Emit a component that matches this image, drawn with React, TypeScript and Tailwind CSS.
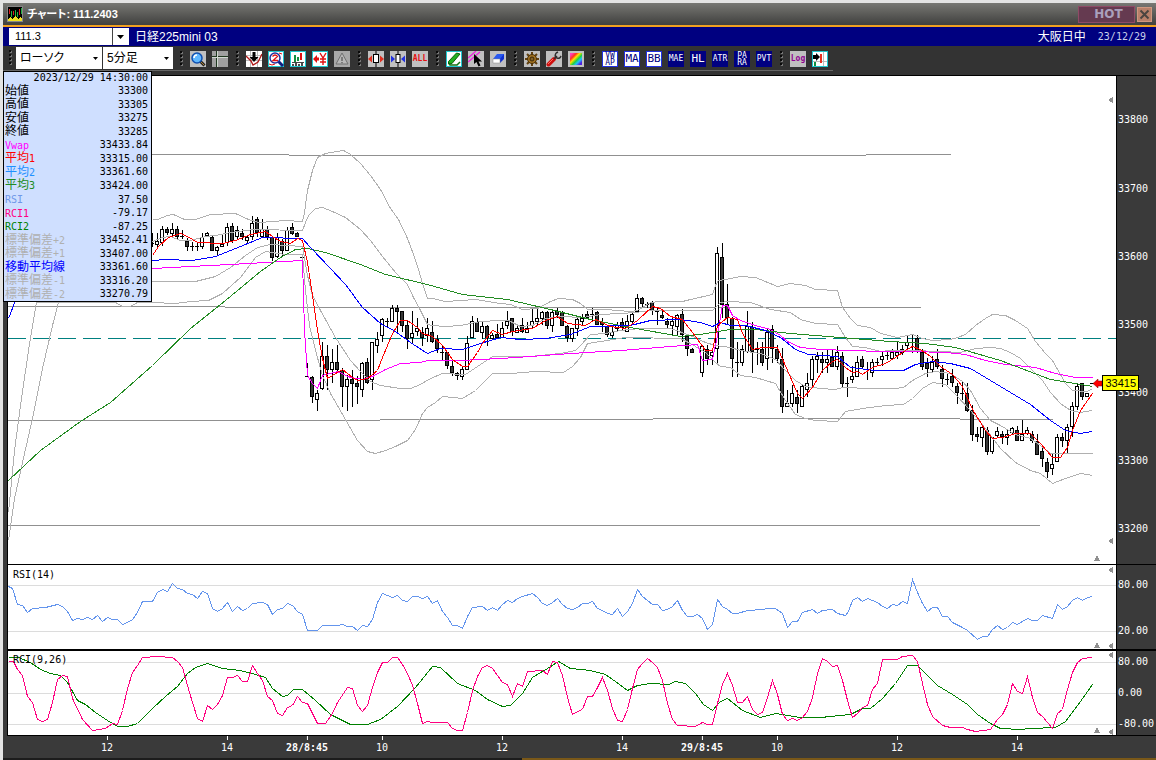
import React from "react";

const CJK = "font-['Liberation_Sans','Noto_Sans_CJK_JP',sans-serif]";
const MONO = "font-['DejaVu_Sans_Mono','Noto_Sans_CJK_JP',monospace] text-[10px]";

/* One row per five-minute bar: wick top, body top, body bottom, wick bottom, 1 = falling bar. */
type Bar = [number, number, number, number, number];
const FIRST_X = 152;
const STEP = 5;
const BARS: (Bar | null)[] = [
  [233, 243, 244, 247, 1], [233, 241, 245, 247, 0], [226, 229, 243, 246, 0], [227, 229, 233, 235, 1],
  [223, 229, 234, 237, 0], [226, 229, 237, 240, 1], [230, 236, 237, 239, 1], [238, 241, 247, 251, 1],
  [242, 246, 247, 251, 1], [243, 246, 247, 251, 1], [233, 237, 247, 249, 0], [232, 233, 236, 237, 0],
  [235, 237, 251, 251, 1], [246, 247, 251, 255, 0], [235, 244, 247, 247, 0], [223, 227, 243, 246, 0],
  [223, 226, 241, 243, 1], [226, 230, 237, 239, 0], [229, 233, 237, 240, 1], [236, 237, 241, 244, 0],
  [216, 223, 237, 240, 0], [217, 219, 233, 237, 1], [219, 229, 237, 238, 0], [226, 229, 237, 240, 1],
  [236, 237, 258, 261, 1], [233, 237, 257, 258, 0], [239, 241, 251, 257, 1], [227, 230, 251, 251, 0],
  [223, 227, 234, 235, 1], [232, 233, 237, 237, 1], [257, 257, 258, 258, 1], [363, 376, 377, 377, 1],
  [376, 377, 397, 403, 1], [390, 393, 400, 411, 0], [342, 356, 389, 390, 0], [345, 356, 370, 390, 1],
  [349, 362, 370, 383, 0], [345, 362, 370, 373, 1], [368, 370, 387, 407, 1], [375, 379, 387, 411, 0],
  [370, 379, 384, 407, 1], [376, 383, 387, 404, 1], [362, 363, 390, 397, 0], [358, 362, 383, 384, 1],
  [342, 342, 380, 390, 0], [332, 339, 346, 353, 0], [318, 319, 336, 342, 0], [318, 321, 322, 327, 1],
  [305, 308, 322, 322, 0], [305, 308, 312, 332, 1], [311, 311, 326, 332, 1], [321, 325, 339, 349, 1],
  [311, 333, 338, 343, 0], [318, 328, 332, 336, 0], [327, 332, 338, 346, 1], [318, 328, 336, 342, 0],
  [321, 332, 342, 343, 1], [335, 339, 349, 353, 1], [345, 352, 353, 360, 1], [352, 352, 366, 369, 1],
  [361, 366, 373, 376, 1], [372, 373, 376, 380, 1], [366, 369, 377, 380, 0], [336, 343, 370, 370, 0],
  [316, 321, 338, 338, 0], [318, 322, 332, 332, 1], [322, 326, 333, 339, 0], [325, 326, 338, 346, 1],
  [333, 335, 339, 339, 0], [324, 334, 338, 338, 1], [322, 328, 338, 338, 0], [311, 321, 326, 329, 0],
  [318, 318, 332, 336, 1], [325, 328, 333, 333, 0], [318, 325, 332, 333, 1], [322, 328, 333, 333, 0],
  [308, 321, 326, 328, 0], [308, 318, 322, 325, 0], [311, 312, 319, 325, 0], [311, 312, 326, 329, 1],
  [311, 312, 326, 332, 0], [308, 311, 315, 318, 1], [311, 312, 326, 326, 1], [325, 326, 338, 342, 1],
  [328, 328, 339, 342, 0], [318, 319, 329, 336, 0], [314, 318, 322, 325, 0], [311, 314, 318, 318, 1],
  [308, 314, 315, 322, 1], [311, 312, 325, 325, 1], [318, 322, 325, 332, 1], [325, 326, 335, 337, 1],
  [325, 332, 336, 338, 0], [322, 325, 329, 332, 0], [318, 322, 328, 330, 1], [315, 321, 332, 332, 0],
  [311, 314, 322, 325, 0], [294, 298, 312, 313, 0], [297, 298, 304, 307, 1], [302, 304, 305, 308, 1],
  [301, 302, 311, 315, 1], [307, 311, 312, 325, 1], [310, 315, 318, 319, 1], [318, 321, 325, 328, 1],
  [318, 321, 326, 336, 0], [314, 315, 327, 336, 0], [309, 314, 335, 342, 1], [335, 336, 349, 356, 1],
  [348, 349, 353, 353, 1], null, [345, 346, 373, 377, 0], [345, 349, 359, 365, 1],
  [349, 352, 356, 365, 0], [247, 253, 349, 363, 0], [243, 257, 305, 318, 1], [284, 304, 318, 325, 1],
  [317, 318, 359, 377, 1], [342, 362, 363, 377, 1], [345, 349, 363, 366, 0], [311, 326, 352, 353, 0],
  [322, 327, 352, 373, 1], [342, 349, 350, 365, 1], [342, 349, 363, 366, 1], [329, 332, 359, 370, 0],
  [325, 329, 349, 363, 1], [345, 349, 359, 363, 1], [348, 359, 407, 413, 1], [390, 403, 407, 407, 0],
  [385, 393, 404, 407, 0], [390, 397, 404, 413, 1], [385, 386, 407, 407, 0], [373, 383, 390, 397, 0],
  [356, 359, 380, 387, 0], [352, 356, 360, 373, 0], [352, 359, 363, 373, 1], [349, 359, 363, 373, 0],
  [349, 357, 367, 367, 1], [346, 352, 367, 370, 0], [352, 356, 384, 387, 1], [377, 383, 384, 397, 1],
  [366, 376, 380, 383, 0], [356, 362, 377, 377, 0], [356, 359, 367, 369, 1], [362, 369, 370, 380, 1],
  [359, 362, 373, 377, 0], [358, 362, 363, 366, 1], [352, 356, 360, 366, 0], [352, 355, 356, 360, 1],
  [349, 352, 359, 360, 0], [342, 352, 356, 359, 0], [345, 349, 353, 355, 0], [335, 342, 346, 351, 0],
  [335, 342, 343, 353, 1], [335, 338, 352, 353, 1], [349, 352, 367, 370, 1], [358, 363, 369, 377, 1],
  [356, 362, 370, 372, 0], [349, 359, 367, 369, 1], [365, 369, 379, 387, 1], [373, 379, 380, 385, 1],
  [369, 376, 383, 387, 1], [383, 386, 393, 404, 1], [382, 393, 394, 400, 1], [383, 393, 411, 412, 1],
  [405, 410, 435, 441, 1], [427, 434, 437, 442, 1], [427, 427, 438, 447, 0], [427, 430, 452, 455, 1],
  [437, 437, 452, 454, 0], [427, 431, 436, 437, 0], [431, 434, 437, 444, 1], [430, 434, 438, 445, 0],
  [427, 428, 433, 434, 0], [426, 430, 441, 441, 1], [420, 434, 441, 441, 0], [427, 430, 434, 435, 0],
  [431, 434, 441, 443, 1], [434, 441, 455, 455, 1], [445, 451, 459, 467, 1], [458, 462, 472, 478, 1],
  [453, 464, 469, 475, 0], [434, 437, 462, 462, 0], [433, 437, 441, 447, 1], [424, 427, 441, 454, 0],
  [402, 406, 427, 437, 0], [383, 386, 407, 410, 0], [383, 383, 397, 400, 1], [393, 393, 397, 397, 0],
  [383, 383, 384, 384, 1],
];

const BAND_COLOR = "#b0b0b0";
const OVERLAYS: { color: string; points: string }[] = [
  { color: BAND_COLOR, points: "152,219 157,219 167,215 173,214 184,219 195,219 210,214 235,213 248,219 258,222 273,221 285,220 302,221 304,212 307,190 312,170 317,157 325,153 343,150 350,154 360,163 370,175 380,189 390,208 398,219 407,238 413,254 418,269 422,283 427,298 432,298 445,301 475,299 500,303 510,304 522,309 537,308 550,301 558,298 572,299 580,303 587,309 605,309 630,311 637,310 650,302 660,301 682,301 690,299 712,294 715,285 718,280 725,279 740,276 755,277 777,286 790,283 805,285 815,289 837,290 842,307 850,318 857,325 870,327 880,333 897,337 912,334 922,338 932,340 950,339 957,337 965,334 975,325 985,318 992,314 1005,315 1015,320 1027,328 1035,341 1045,353 1052,360 1060,374 1065,383 1072,390 1087,391 1092,388" },
  { color: BAND_COLOR, points: "152,241 162,237 170,236 180,240 190,240 205,236 215,235 230,232 245,230 255,229 302,230 305,222 308,215 315,208 322,207 332,211 345,217 360,229 370,240 382,256 395,272 407,284 413,297 420,310 427,324 432,325 445,326 460,325 480,321 500,320 508,320 520,326 532,325 545,318 560,316 583,317 600,314 620,313 635,312 650,310 712,310 720,302 727,301 750,302 770,309 790,312 800,319 815,323 837,324 845,337 852,346 865,347 880,351 890,350 910,350 940,351 960,352 975,348 990,347 1000,348 1010,352 1020,358 1030,368 1042,380 1050,392 1060,403 1070,410 1080,412 1092,410" },
  { color: BAND_COLOR, points: "8,540 14,498 22,462 32,418 42,368 52,325 58,302 152,281 195,281 215,276 230,267 245,255 257,247 270,244 302,246 307,275 312,295 320,310 335,337 350,360 360,371 370,381 380,385 400,388 410,388 420,384 430,378 442,373 465,374 480,364 492,356 530,356 560,353 575,350 580,345 590,334 605,333 620,330 640,328 670,328 690,335 705,342 715,345 730,347 740,350 760,353 775,359 785,370 795,380 805,386 820,388 835,389 842,387 870,388 895,388 903,387 912,380 925,373 935,371 950,373 962,381 970,390 980,408 990,420 1000,425 1015,434 1030,438 1040,445 1050,453 1092,453" },
  { color: BAND_COLOR, points: "8,512 14,450 20,405 28,350 36,302 115,302 122,306 130,306 137,302 152,302 175,303 190,301 208,300 222,293 240,277 255,257 265,251 285,254 302,254 305,290 309,325 315,350 322,375 330,393 345,419 357,440 367,451 375,453 385,450 395,446 407,440 415,429 422,413 427,407 435,402 442,396 462,398 475,390 485,380 492,373 510,373 535,371 563,372 572,366 580,357 587,343 600,341 625,337 680,338 690,343 705,352 715,362 720,366 730,367 740,375 755,377 775,383 785,400 795,414 805,418 815,420 837,421 845,411 862,408 885,405 903,404 912,398 922,388 932,382 945,384 955,394 970,410 985,428 1000,448 1015,462 1030,470 1040,473 1052,483 1065,478 1080,473 1092,475" },
  { color: "#ff00ff", points: "152,268 190,266 230,264 265,262 302,260 304,330 307,375 312,383 317,388 322,375 337,371 350,377 362,379 372,376 385,369 400,363 420,362 427,360 460,360 500,358 530,356 570,353 620,350 670,346 697,344 702,360 712,359 717,335 722,305 727,305 732,315 740,320 755,325 770,329 780,335 787,341 800,347 820,349 850,350 880,351 910,351 945,352 965,354 985,360 1005,364 1035,367 1055,373 1075,377 1092,377" },
  { color: "#228b22", points: "8,480 40,450 80,421 110,402 152,365 190,328 225,300 260,271 280,257 295,249 307,248 325,252 360,264 385,274 410,280 427,284 462,294 507,299 550,309 590,319 630,327 680,336 700,334 730,329 755,329 790,333 840,337 890,341 925,343 955,347 1000,360 1050,379 1075,383 1092,386" },
  { color: "#0000ff", points: "8,318 15,300 152,260 165,259 192,260 215,256 235,248 262,237 302,238 310,247 330,268 345,284 362,307 380,323 395,331 410,342 427,353 440,348 462,349 480,343 500,337 520,339 545,338 570,334 590,326 630,325 650,320 680,319 700,322 712,326 720,322 730,325 745,325 765,330 780,337 795,349 808,354 837,356 850,367 875,370 903,370 915,364 932,361 950,363 970,368 1000,386 1030,404 1050,420 1065,430 1080,433 1092,431" },
  { color: "#ff0000", points: "152,255 158,246 168,237 180,233 187,236 197,242 222,243 235,240 250,234 265,231 272,236 280,241 290,243 297,238 302,240 307,262 312,295 317,330 322,358 327,378 332,375 342,369 352,377 357,380 367,378 377,370 382,357 392,333 400,320 407,320 417,327 422,333 432,336 442,345 452,359 462,366 467,366 477,352 482,343 492,330 502,334 512,331 532,328 545,320 557,316 567,323 585,325 595,319 610,326 625,328 637,320 652,306 660,308 670,316 682,319 695,336 705,350 712,350 717,325 727,317 737,319 742,333 752,349 762,347 777,347 787,370 797,393 802,398 812,387 822,370 832,361 837,359 845,367 852,372 857,371 862,374 872,367 885,363 895,357 905,350 912,346 920,349 930,356 940,366 952,374 962,386 972,409 985,430 992,438 1002,437 1015,433 1030,433 1040,443 1052,457 1060,457 1067,447 1072,430 1080,410 1092,393" },
];

const RSI =
  "8,586 12,588 17,604 22,605 27,612 32,608 45,607 57,604 62,606 67,611 72,620 77,618 82,619 87,617 92,619 97,615 102,621 107,617 112,619 117,619 122,624 127,622 132,619 137,612 142,601 152,601 157,592 162,589 167,591 172,583 177,588 182,589 187,593 192,594 197,598 202,591 207,593 212,608 217,611 222,608 227,602 232,611 237,606 242,610 247,608 252,603 262,602 267,604 272,614 277,609 282,608 287,603 292,605 297,611 302,614 307,630 317,630 322,625 337,625 342,624 347,626 352,626 357,630 362,625 367,626 372,619 377,602 382,593 387,595 392,597 397,595 402,600 407,601 412,596 417,596 422,598 427,596 432,603 437,600 442,611 447,617 452,625 457,625 462,628 467,616 472,607 482,606 487,610 492,607 497,610 502,604 507,600 512,602 517,598 522,596 532,593 537,597 542,603 547,605 552,602 557,598 562,604 567,608 572,609 577,607 582,603 587,603 592,601 597,608 602,610 607,613 612,614 617,608 622,616 627,611 632,603 637,589 642,596 652,604 657,604 662,610 667,609 672,606 677,600 682,610 687,616 692,616 697,614 702,618 707,629 712,624 717,599 722,606 727,609 732,613 737,613 747,610 762,609 767,608 775,608 782,613 787,627 792,621 797,621 802,612 812,609 817,613 822,610 832,609 837,613 845,615 848,611 852,600 857,597 862,601 867,598 877,602 882,606 887,608 892,604 897,605 902,601 907,603 912,579 917,592 922,603 927,611 932,607 937,607 942,616 947,616 952,622 960,626 967,630 977,639 982,636 987,636 992,629 997,625 1002,629 1007,627 1012,622 1017,624 1027,618 1032,620 1037,620 1042,615 1052,618 1057,604 1062,609 1067,606 1072,600 1077,597 1082,600 1087,597 1092,596";

const RCI_SHORT =
  "8,661 13,661 17,669 22,675 27,696 32,702 37,719 42,721 47,719 52,702 57,679 62,675 67,676 72,698 82,719 92,730 105,728 112,723 117,724 122,710 127,688 132,672 137,665 142,657 157,656 172,657 177,661 182,667 187,685 192,702 197,718 202,721 207,705 212,709 217,704 222,695 227,677 232,677 237,675 242,681 247,681 252,665 257,673 262,680 267,696 272,700 277,713 282,715 287,707 292,705 297,696 302,702 307,703 312,713 317,723 325,723 332,713 337,702 347,687 352,688 357,705 362,711 367,705 372,687 377,672 382,662 387,662 392,657 397,657 402,664 407,673 412,685 417,703 422,723 427,721 432,722 447,722 452,728 457,730 462,730 467,712 472,690 477,676 482,667 487,665 492,668 497,675 502,682 507,684 512,696 517,683 522,686 527,671 542,670 547,674 552,661 557,662 562,675 567,697 572,714 577,711 582,709 587,696 592,696 597,687 602,677 607,690 612,708 617,720 622,721 627,709 632,688 637,669 642,663 647,658 652,662 657,667 662,680 667,703 672,719 677,725 695,726 702,722 707,724 712,724 717,703 722,684 727,673 732,685 737,702 742,702 747,696 752,709 757,714 762,712 767,697 772,680 777,694 782,714 787,720 792,718 797,720 802,717 807,711 812,697 817,673 822,658 827,661 832,666 837,665 842,680 847,700 852,717 857,713 862,707 867,705 872,689 877,683 882,659 897,659 902,656 912,655 917,661 922,683 927,704 932,716 942,725 950,727 962,727 967,729 975,731 990,729 997,719 1002,714 1007,704 1012,683 1017,691 1022,693 1027,676 1032,697 1037,712 1042,716 1052,728 1057,713 1062,709 1067,689 1072,672 1077,662 1082,658 1092,657";

const RCI_LONG =
  "8,657 18,657 30,662 40,669 50,673 60,675 67,682 77,700 85,704 95,712 107,720 117,726 127,726 137,723 152,708 165,696 177,686 187,673 195,667 207,663 222,668 240,670 255,674 265,677 272,688 282,696 287,695 293,689 302,689 315,700 330,714 350,724 367,724 380,719 397,706 415,687 432,666 440,667 457,683 475,690 487,699 502,706 510,705 522,693 532,677 547,668 558,661 570,668 590,670 605,674 615,681 627,690 637,685 650,683 668,684 675,681 685,683 695,693 703,704 712,710 720,701 727,698 742,710 760,717 775,713 800,717 820,717 850,714 862,708 870,708 882,698 895,683 907,665 917,665 937,685 952,694 967,704 977,714 990,723 1000,728 1020,729 1030,728 1055,727 1065,721 1080,701 1092,684";

const QUOTES: [string, string, string][] = [
  ["始値", "33300", "text-black"],
  ["高値", "33305", "text-black"],
  ["安値", "33275", "text-black"],
  ["終値", "33285", "text-black"],
  ["Vwap", "33433.84", "text-[#ff00ff]"],
  ["平均1", "33315.00", "text-[#ff0000]"],
  ["平均2", "33361.60", "text-[#1e90ff]"],
  ["平均3", "33424.00", "text-[#228b22]"],
  ["RSI", "37.50", "text-[#6f98e8]"],
  ["RCI1", "-79.17", "text-[#ff0080]"],
  ["RCI2", "-87.25", "text-[#008000]"],
  ["標準偏差+2", "33452.41", "text-[#b0b0b0]"],
  ["標準偏差+1", "33407.00", "text-[#b0b0b0]"],
  ["移動平均線", "33361.60", "text-[#0000ff]"],
  ["標準偏差-1", "33316.20", "text-[#b0b0b0]"],
  ["標準偏差-2", "33270.79", "text-[#b0b0b0]"],
];

const TIMES: [number, string, boolean][] = [
  [107, "12", false], [227, "14", false], [307, "28/8:45", true], [382, "10", false], [502, "12", false],
  [622, "14", false], [702, "29/8:45", true], [777, "10", false], [897, "12", false], [1017, "14", false],
];

function Trace({ points, color }: { points: string; color: string }) {
  return <polyline points={points} fill="none" stroke={color} strokeWidth={1} transform="translate(0.5 0.5)" />;
}

function Candles() {
  return (
    <g>
      {BARS.map((bar, i) => {
        if (!bar) return null;
        const [high, top, bottom, low, falling] = bar;
        const x = FIRST_X + STEP * i;
        const h = bottom - top;
        return (
          <g key={i}>
            <rect x={x} y={high} width={1} height={Math.max(1, low - high)} fill="#000" />
            <rect x={x - 2} y={top} width={4} height={h} fill="#000" />
            {h > 2 && <rect x={x - 1} y={top + 1} width={2} height={h - 2} fill={falling ? "#383838" : "#fff"} />}
          </g>
        );
      })}
    </g>
  );
}

function Arrows({ left, up }: { left: number[]; up: number[] }) {
  return (
    <g fill="#909090">
      {left.map((y) => <path key={y} d={`M1108 ${y}l5-3v6z`} />)}
      {up.map((y) => <path key={y} d={`M1097 ${y - 3}l3 6h-6z`} />)}
    </g>
  );
}

function Pane({ top, height, label, children }: { top: number; height: number; label: string; children: React.ReactNode }) {
  return (
    <svg
      role="img"
      aria-label={label}
      viewBox={`8 ${top} 1108 ${height}`}
      preserveAspectRatio="none"
      shapeRendering="crispEdges"
      className="block w-full h-full bg-white"
    >
      {children}
    </svg>
  );
}

function Scale({ top, height, ticks }: { top: number; height: number; ticks: [number, string][] }) {
  return (
    <div className={`relative w-[39px] shrink-0 text-white leading-3 ${MONO}`}>
      {ticks.map(([y, text]) => (
        <span key={text} className="absolute left-px -translate-y-1/2" style={{ top: `${((y - top) / height) * 100}%` }}>
          {text}
        </span>
      ))}
    </div>
  );
}

function Grip() {
  return (
    <svg width="6" height="16" viewBox="0 0 6 16" className="shrink-0" shapeRendering="crispEdges" aria-hidden="true">
      {[0, 4, 8, 12].map((y) => (
        <g key={y}>
          <rect x="3" y={y + 1} width="2" height="2" fill="#777" />
          <rect x="2" y={y} width="2" height="2" fill="#0a0a0a" />
        </g>
      ))}
    </svg>
  );
}

function Tool({ label, children }: { label: string; children: React.ReactNode }) {
  return (
    <button type="button" aria-label={label} title={label} className="block size-4 shrink-0">
      <svg width="16" height="16" viewBox="0 0 16 16" className="block" aria-hidden="true">
        {children}
      </svg>
    </button>
  );
}

function Face({ fill = "#c0c0c0", edge }: { fill?: string; edge?: string }) {
  return (
    <>
      <rect width="16" height="16" fill={edge ?? fill} />
      <rect x="1" y="1" width="14" height="14" fill={fill} />
    </>
  );
}

function TextTool({ lines, tone }: { lines: string[]; tone: "light" | "dark" | "log" }) {
  const tones = {
    light: "bg-white text-[#000080] border border-[#2030e0]",
    dark: "bg-[#000080] text-white border border-[#000080]",
    log: "bg-[#c0c0c0] text-[#900090] border border-[#c0c0c0] font-bold",
  };
  const size = lines.length > 1 ? "text-[8px] leading-[7px]" : lines[0].length === 2 ? "text-[11px] leading-3" : "text-[8px] leading-3";
  return (
    <button
      type="button"
      className={`flex flex-col items-center justify-center size-4 shrink-0 font-['DejaVu_Sans_Mono',monospace] ${size} ${tones[tone]}`}
    >
      {lines.map((l) => <span key={l}>{l}</span>)}
    </button>
  );
}

const CYAN = "#20c8d0";

function ToolBar() {
  return (
    <div className="flex items-center h-[24px] bg-[#333] pl-[4px]">
      <Grip />
      <Picker id="style" label="足種" value="ローソク" className="w-[86px] ml-[3px]" />
      <Picker id="span" label="足間隔" value="5分足" className="w-[70px] ml-px mr-[5px]" />
      <div className="flex items-center gap-1.5 pt-px">
        <Grip />
        <Tool label="検索">
          <Face />
          <path d="M10 10l4.500 4.500" stroke="#222" strokeWidth="3" />
          <path d="M10 10l4 4" stroke="#b08030" strokeWidth="1" />
          <circle cx="7" cy="7" r="5" fill="#60b8ff" stroke="#1050b0" strokeWidth="1.500" />
          <path d="M4 7a3 3 0 0 1 3-3" stroke="#fff" strokeWidth="1.600" fill="none" />
        </Tool>
        <Tool label="十字線">
          <Face fill="#a0a0a0" />
          <path d="M4.500 0v16M0 5.500h16" stroke="#203820" strokeWidth="1" />
          <path d="M5.500 0v16M0 6.500h16" stroke="#d0d8d0" strokeWidth="1" />
        </Tool>
        <Grip />
        <Tool label="比較">
          <Face fill="#fff" />
          <path d="M0 4.500h16M0 9.500h16M4.500 0v16M11.500 0v16" stroke="#bbb" />
          <path d="M0 5l5 5 2 4 5-3 4-8" stroke="#b01818" strokeWidth="1.300" fill="none" />
          <path d="M8 1v5" stroke="#000" strokeWidth="3" />
          <path d="M3.500 6h9L8 11z" fill="#000" />
        </Tool>
        <Tool label="拡大">
          <Face fill="#fff" edge={CYAN} />
          <path d="M10 10l5 5" stroke="#102080" strokeWidth="3" />
          <circle cx="7" cy="7" r="5" fill="#fff" stroke="#2030a0" strokeWidth="1.500" />
          <path d="M4.500 5.500q2.500-3 5 0L5 9.500h5" stroke="#e01010" strokeWidth="1.300" fill="none" />
          <path d="M1 13l3 1 3-1M11 2l3 1" stroke="#e01010" fill="none" />
        </Tool>
        <Tool label="出来高">
          <Face fill="#fff" edge={CYAN} />
          <path d="M5 4v7" stroke="#119040" strokeWidth="2" />
          <path d="M11 2v7" stroke="#e01010" strokeWidth="2" />
          <path d="M8 6v4" stroke="#119040" strokeWidth="2" />
          <path d="M2 11.500h12" stroke="#444" />
          <path d="M3 15v-2M6 15v-3M9 15v-2M12 15v-3" stroke="#111" strokeWidth="1.500" />
        </Tool>
        <Tool label="約定">
          <Face fill="#fff" edge={CYAN} />
          <path d="M1 8l4-4v2.500h2v3H5V12z" fill="#e01010" />
          <path d="M8 2l3 5 3-5M11 7v7M8 8h6M8 11h6" stroke="#e01010" strokeWidth="1.400" fill="none" />
        </Tool>
        <Tool label="警告">
          <Face fill="#a8a8a8" />
          <path d="M8 2l6 11H2z" fill="#b8b8b8" stroke="#707070" />
          <path d="M8 6v4M8 11v1.200" stroke="#666" strokeWidth="1.500" />
        </Tool>
        <Grip />
        <Tool label="足幅を拡大">
          <Face />
          <path d="M8 0v16" stroke="#000" />
          <rect x="5.500" y="3.500" width="5" height="8" fill="#fff" stroke="#000" />
          <path d="M0 8l4-3.500v7zM16 8l-4-3.500v7z" fill="#e03020" />
        </Tool>
        <Tool label="足幅を縮小">
          <Face />
          <path d="M8 0v16" stroke="#000" />
          <rect x="6" y="3.500" width="4" height="8" fill="#fff" stroke="#000" />
          <path d="M5 8L1 4.500v7zM11 8l4-3.500v7z" fill="#2030e0" />
        </Tool>
        <button type="button" className="size-4 shrink-0 bg-[#c0c0c0] text-[#e81010] text-[8px] leading-4 font-bold text-center font-['DejaVu_Sans_Mono',monospace]">ALL</button>
        <Grip />
        <Tool label="描画">
          <Face fill="#fff" edge={CYAN} />
          <path d="M2.500 10.500l8-8.500 3.500 1-8 9.500-3.500.5z" fill="#20b020" stroke="#086008" />
          <path d="M3 12l1 2h7l3-3" stroke="#107010" strokeWidth="1.500" fill="none" />
        </Tool>
        <Tool label="選択">
          <Face />
          <path d="M0 7l8-7M0 11L12 1" stroke="#f020e0" strokeWidth="1.300" />
          <path d="M6 3v10l2.500-2 2 4.500 2-1-2-4H14z" fill="#000" />
        </Tool>
        <Tool label="消去">
          <Face />
          <path d="M7 3h7v5l-4 4z" fill="#1030d0" />
          <path d="M3 8l4-5h7l-4 5z" fill="#2858f0" />
          <path d="M3 8h7v4H3z" fill="#fff" stroke="#888" strokeWidth=".5" />
        </Tool>
        <Grip />
        <Tool label="設定">
          <Face />
          <path d="M8 1v14M1 8h14M3 3l10 10M13 3L3 13" stroke="#604010" strokeWidth="2" />
          <circle cx="8" cy="8" r="4.500" fill="#a07020" stroke="#4a3008" />
          <circle cx="8" cy="8" r="2" fill="#806028" stroke="#3a2808" />
        </Tool>
        <Tool label="ツール">
          <Face />
          <path d="M2.500 13.500L8 8" stroke="#d01010" strokeWidth="4" strokeLinecap="round" />
          <path d="M2 13l5-5" stroke="#ff7060" strokeWidth="1" />
          <path d="M8 8l3-3M10 2q-2 4 1 5t4-2M10 2l2-1M15 5l-1 2" stroke="#303030" strokeWidth="1.500" fill="none" />
        </Tool>
        <Tool label="配色">
          <Face />
          <defs>
            <linearGradient id="hue" x1="0" y1="0" x2="1" y2="1">
              <stop offset=".1" stopColor="#ff40c0" />
              <stop offset=".28" stopColor="#ff3020" />
              <stop offset=".42" stopColor="#ffe000" />
              <stop offset=".58" stopColor="#20d040" />
              <stop offset=".72" stopColor="#20c0ff" />
              <stop offset=".88" stopColor="#5020e0" />
            </linearGradient>
          </defs>
          <rect x="2" y="2" width="12" height="12" fill="url(#hue)" />
        </Tool>
        <Grip />
        <TextTool lines={["VW", "AP"]} tone="light" />
        <TextTool lines={["MA"]} tone="light" />
        <TextTool lines={["BB"]} tone="light" />
        <TextTool lines={["MAE"]} tone="dark" />
        <TextTool lines={["HL"]} tone="dark" />
        <TextTool lines={["ATR"]} tone="dark" />
        <TextTool lines={["PA", "RA"]} tone="dark" />
        <TextTool lines={["PVT"]} tone="dark" />
        <Grip />
        <TextTool lines={["Log"]} tone="log" />
        <Tool label="余白">
          <Face fill="#fff" edge={CYAN} />
          <path d="M1 10.500h14M11.500 1v14" stroke="#bbb" />
          <path d="M1 4h3V2l4 4-4 4V8H1z" fill="#000" />
          <path d="M9 3v9" stroke="#e83020" strokeWidth="2" />
          <path d="M3 11v4" stroke="#109040" strokeWidth="2" />
        </Tool>
      </div>
    </div>
  );
}

function Picker({ id, label, value, className }: { id: string; label: string; value: string; className: string }) {
  return (
    <div className={`relative h-[22px] shrink-0 ${className}`}>
      <label htmlFor={id} className="sr-only">{label}</label>
      <select
        id={id}
        className={`appearance-none block w-full h-full bg-white text-black text-[12px] leading-normal pl-1 rounded-none outline-none [font-feature-settings:'palt'] ${CJK}`}
      >
        <option>{value}</option>
      </select>
      <svg width="5" height="3" viewBox="0 0 5 3" className="absolute right-1 top-[10px] pointer-events-none" aria-hidden="true">
        <path d="M0 0h5L2.500 3z" fill="#000" />
      </svg>
    </div>
  );
}

function TitleBar() {
  return (
    <header className="flex items-center h-[22px] pl-1 pr-1 bg-linear-to-b from-[#787874] to-[#40403e]">
      <svg width="16" height="16" viewBox="0 0 16 16" className="shrink-0" shapeRendering="crispEdges" aria-hidden="true">
        <rect width="16" height="16" fill="#888" />
        <rect x="1" y="1" width="14" height="14" fill="#000" />
        <path d="M2.500 3v5M6.500 5v4M12.500 3v6" stroke="#e02020" />
        <path d="M4.500 5v6M8.500 4v7M10.500 6v5M14 2v6" stroke="#20b040" />
        <path d="M1 15v-2l2-2 3 2 2-3 3 3 2-2 2 1v3z" fill="#f0e020" />
      </svg>
      <h1 className={`ml-1 text-white font-bold text-[11px] leading-[22px] [font-feature-settings:'palt'] ${CJK}`}>チャート: 111.2403</h1>
      <button type="button" className="ml-auto w-[57px] h-[17px] bg-[#653a50] border border-[#8f4a66] text-[#aaa0bc] font-bold text-[12px] leading-[14px] pl-1 font-['DejaVu_Sans',sans-serif]">
        HOT
      </button>
      <button type="button" aria-label="閉じる" className="ml-0.5 size-[15px] bg-[#b8806a] border border-[#d09880]">
        <svg width="13" height="13" viewBox="0 0 13 13" aria-hidden="true">
          <path d="M2.500 2.500l8 8M10.500 2.500l-8 8" stroke="#4a4440" strokeWidth="2" />
        </svg>
      </button>
    </header>
  );
}

function SymbolBar() {
  return (
    <div className={`flex items-center h-[19px] bg-[#000080] text-white text-[12px] leading-[18px] pl-[6px] pr-[10px] ${CJK}`}>
      <div className="relative w-[120px] h-[17px]">
        <label htmlFor="code" className="sr-only">銘柄コード</label>
        <select id="code" className="appearance-none block w-full h-full bg-white text-black text-[11px] leading-normal pl-1.5 rounded-none outline-none font-['Liberation_Sans',sans-serif]">
          <option>111.3</option>
        </select>
        <svg width="17" height="17" viewBox="0 0 17 17" className="absolute right-0 top-0 pointer-events-none" aria-hidden="true">
          <path d="M.5 0v17" stroke="#444" />
          <path d="M5 7h7l-3.500 4z" fill="#000" />
        </svg>
      </div>
      <span className="ml-1.5">日経225mini 03</span>
      <span className="ml-auto">大阪日中</span>
      <time className={`ml-3 text-[#c8d0e8] ${MONO}`}>23/12/29</time>
    </div>
  );
}

function QuotePanel() {
  return (
    <aside className="absolute left-0 top-[-4px] w-[149px] border border-black bg-[#cfdfff] z-10">
      <table className={`w-full h-[229px] border-collapse leading-[12px] text-black ${MONO}`}>
        <tbody>
          <tr>
            <th colSpan={2} className="p-0 pr-[3px] font-normal text-right whitespace-pre">2023/12/29 14:30:00</th>
          </tr>
          {QUOTES.map(([name, value, tone]) => (
            <tr key={name}>
              <th scope="row" className={`p-0 pl-px font-normal text-left whitespace-nowrap ${tone}`}>
                {name.split(/([\x20-\x7e]+)/).map((part, i) => (
                  <span key={i} className={i % 2 ? "text-[10px]" : "text-[12px]"}>{part}</span>
                ))}
              </th>
              <td className="p-0 pr-[3px] text-right">{value}</td>
            </tr>
          ))}
        </tbody>
      </table>
    </aside>
  );
}

export default function App() {
  return (
    <div className="min-h-screen bg-[#3a3a3a] border-t-[3px] border-l-[3px] border-[#e4e4e4]">
      <TitleBar />
      <div className="h-[2px] bg-[#f0a020]" />
      <SymbolBar />
      <ToolBar />
      <div className="h-[5px] bg-[#333]">
        <div className="h-px w-[830px] bg-[#666]" />
      </div>

      <main className="relative pl-1">
        <QuotePanel />
        <section className="flex border-t border-l border-black h-[489px] relative">
          <div className="flex-1 min-w-0 border-r border-black">
            <Pane top={76} height={488} label="日経225mini 5分足">
              <g fill="none" stroke="#909090">
                <path d="M152 154.500H289M289 155.500H866M866 154.500H951" />
                <path d="M8 306.500H225M225 307.500H921" />
                <path d="M8 420.500H380M380 419.500H653M653 418.500H960M960 419.500H1053" />
                <path d="M8 525.500H1040" />
              </g>
              <path d="M8 338.500H1116" stroke="#008080" strokeDasharray="18 7" />
              <Candles />
              {OVERLAYS.map((o, i) => <Trace key={i} {...o} />)}
              <Arrows left={[100, 541]} up={[558]} />
            </Pane>
          </div>
          <Scale
            top={76}
            height={488}
            ticks={[[120, "33800"], [189, "33700"], [257, "33600"], [325, "33500"], [393, "33400"], [461, "33300"], [529, "33200"]]}
          />
          <output className="absolute right-[17px] top-[299px] flex items-center">
            <svg width="9" height="9" viewBox="0 0 9 9" aria-hidden="true">
              <path d="M0 4.500L5 0v2h4v5H5v2z" fill="#ff0000" stroke="#700" strokeWidth=".5" />
            </svg>
            <span className={`block border border-black bg-[#ffff00] text-black text-[11px] leading-[14px] px-[2px] ${CJK}`}>33415</span>
          </output>
        </section>

        <section className="flex relative border-t border-l border-black h-[85px]">
          <h2 className={`absolute left-[5px] top-1 leading-3 text-black ${MONO}`}>RSI(14)</h2>
          <div className="flex-1 min-w-0 border-r border-black">
            <Pane top={565} height={84} label="RSI">
              <path d="M8 585.500H1116M8 631.500H1116" stroke="#dcdcdc" />
              <Trace points={RSI} color="#6495ed" />
              <Arrows left={[570, 646]} up={[645]} />
            </Pane>
          </div>
          <Scale top={565} height={84} ticks={[[585, "80.00"], [631, "20.00"]]} />
        </section>

        <section className="flex relative border-t-2 border-b border-l border-black h-[87px]">
          <h2 className={`absolute left-[5px] top-[3px] leading-3 text-black ${MONO}`}>RCI(9,26)</h2>
          <div className="flex-1 min-w-0 border-r border-black">
            <Pane top={651} height={84} label="RCI">
              <path d="M8 662.500H1116M8 693.500H1116M8 724.500H1116" stroke="#dcdcdc" />
              <Trace points={RCI_LONG} color="#008000" />
              <Trace points={RCI_SHORT} color="#ff0080" />
              <Arrows left={[655, 732]} up={[730]} />
            </Pane>
          </div>
          <Scale top={651} height={84} ticks={[[662, "80.00"], [693, "0.00"], [724, "-80.00"]]} />
        </section>

        <div className={`relative h-[22px] mr-[40px] ml-px text-white leading-3 ${MONO}`}>
          {TIMES.map(([x, text, bold]) => (
            <div key={x} className="absolute top-0 flex flex-col items-center -translate-x-1/2" style={{ left: `${((x - 8) / 1108) * 100}%` }}>
              <span className="w-px h-1 bg-white" />
              <span className={bold ? "mt-0.5 font-bold" : "mt-0.5"}>{text}</span>
            </div>
          ))}
        </div>
      </main>

      <footer className="flex h-[2px]">
        <div className="w-[45%] bg-[#1c1c1c]" />
        <div className="flex-1 bg-[#7a5818]" />
      </footer>
    </div>
  );
}
